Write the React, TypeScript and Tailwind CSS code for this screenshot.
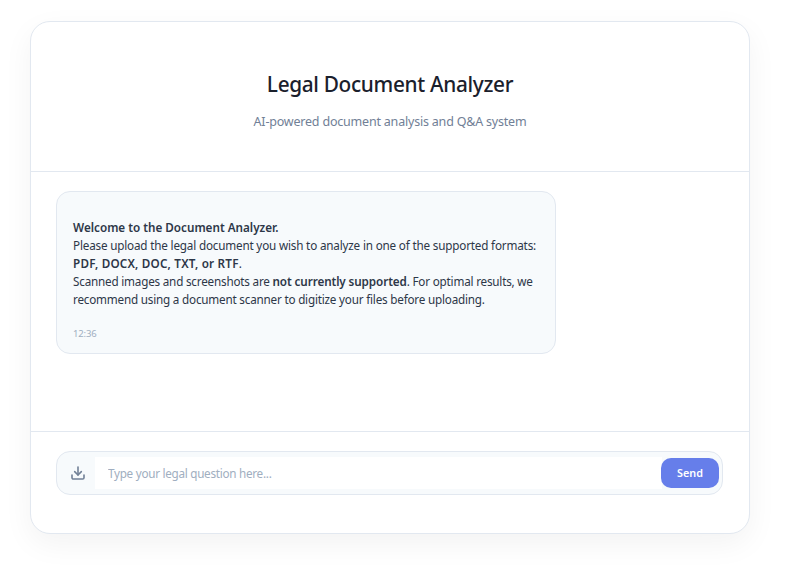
import { Download } from 'lucide-react';

export default function App() {
  return (
    <div className="min-h-screen bg-white pt-[21px] pl-[30px] font-['Noto_Sans',sans-serif]">
      <div className="flex h-[513px] w-[720px] flex-col rounded-[20px] border border-[#e2e8f0] bg-white shadow-[0_10px_30px_rgba(0,0,0,0.05)]">
        {/* Header */}
        <header className="h-[150px] border-b border-[#e2e8f0] pt-[46px] text-center">
          <h1 className="text-[20.8px] leading-[32px] font-medium tracking-[-0.33px] text-[#1a202c]">Legal Document Analyzer</h1>
          <p className="mt-[12px] text-[12.5px] leading-[20px] tracking-[-0.2px] text-[#718096]">AI-powered document analysis and Q&amp;A system</p>
        </header>

        {/* Messages */}
        <main className="flex-1 pr-[26px] pl-[25px] pt-[19px]">
          <div className="h-[163px] w-[500px] rounded-[14px] border border-[#e2e8f0] bg-[#f7fafc] px-[16px] pt-[26px] text-[11.7px] leading-[18px] tracking-[-0.2px] text-[#2d3748]">
            <p>
              <strong className="font-semibold tracking-[0px]">Welcome to the Document Analyzer.</strong>
              <br />
              <span className="tracking-[-0.18px]">Please upload the legal document you wish to analyze in one of the supported formats:</span>
              <br />
              <strong className="font-semibold tracking-[0.2px]">PDF, DOCX, DOC, TXT, or RTF</strong>.
              <br />
              Scanned images and screenshots are <strong className="font-semibold tracking-[-0.1px]">not currently supported</strong>. For optimal results, we recommend using a document scanner to digitize your files before uploading.
            </p>
            <p className="mt-[19px] text-[9.5px] leading-[14px] tracking-[-0.17px] text-[#a0aec0]">12:36</p>
          </div>
        </main>

        {/* Input */}
        <footer className="h-[102px] border-t border-[#e2e8f0] pr-[26px] pl-[25px] pt-[19px]">
          <div className="flex h-[44px] items-center rounded-[14px] border border-[#e2e8f0] bg-[#f7fafc] pr-[3px] pl-[3px]">
            <button className="flex h-[34px] w-[35px] items-center justify-center rounded-[10px] text-[#718096]">
              <Download className="h-[16px] w-[16px]" strokeWidth={2.4} />
            </button>
            <input
              className="h-[32px] flex-1 bg-white px-[13px] text-[11.7px] tracking-[-0.27px] text-[#2d3748] outline-none placeholder:text-[#a0aec0]"
              placeholder="Type your legal question here..."
            />
            <button className="-ml-[1px] h-[30px] w-[58px] rounded-[10px] bg-[#667eea] text-[10.8px] font-semibold text-white">Send</button>
          </div>
        </footer>
      </div>
    </div>
  );
}
